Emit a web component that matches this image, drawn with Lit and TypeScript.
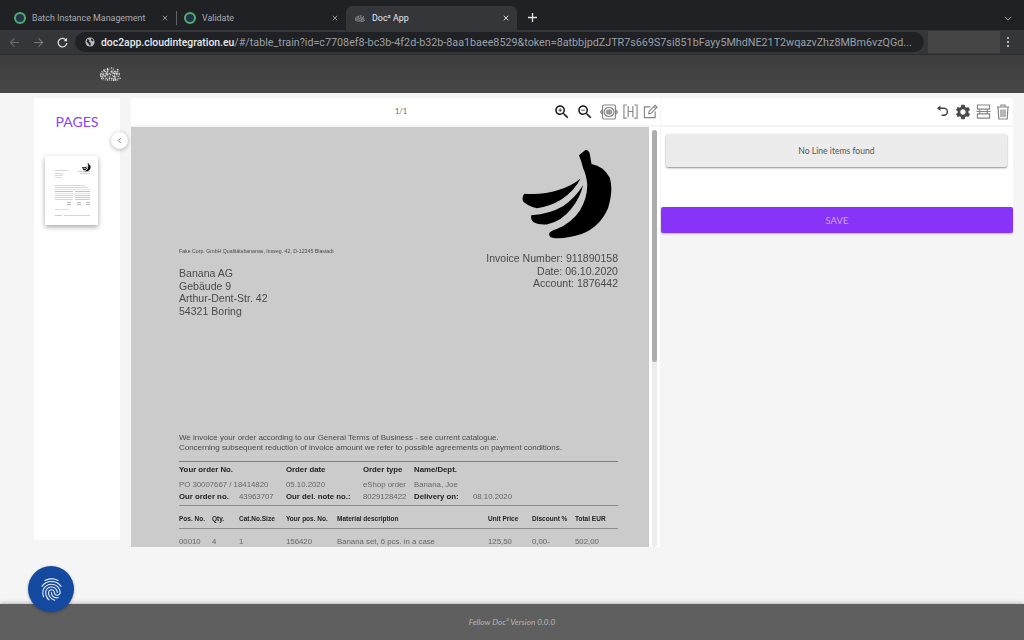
import { css, html, LitElement, svg } from 'lit'
import { customElement } from 'lit/decorators.js'

const URL_HOST = 'doc2app.cloudintegration.eu'
const URL_REST = '/#/table_train?id=c7708ef8-bc3b-4f2d-b32b-8aa1baee8529&token=8atbbjpdZJTR7s669S7si851bFayy5MhdNE21T2wqazvZhz8MBm6vzQGd...'

const LINE_ITEM_HEADS = ['Pos. No.', 'Qty.', 'Cat.No.Size', 'Your pos. No.', 'Material description', 'Unit Price', 'Discount %', 'Total EUR']
const LINE_ITEM = ['00010', '4', '1', '156420', 'Banana set, 6 pcs. in a case', '125,50', '0,00-', '502,00']

const ZOOM_GLASS = 'M15.5 14h-.79l-.28-.27C15.41 12.59 16 11.11 16 9.5 16 5.91 13.09 3 9.5 3S3 5.91 3 9.5 5.91 16 9.5 16c1.61 0 3.09-.59 4.23-1.57l.27.28v.79l5 4.99L20.49 19l-4.99-5zm-6 0C7.01 14 5 11.99 5 9.5S7.01 5 9.5 5 14 7.01 14 9.5 11.99 14 9.5 14z'
const GEAR = 'M19.14 12.94c.04-.3.06-.61.06-.94 0-.32-.02-.64-.07-.94l2.03-1.58c.18-.14.23-.41.12-.61l-1.92-3.32c-.12-.22-.37-.29-.59-.22l-2.39.96c-.5-.38-1.03-.7-1.62-.94l-.36-2.54c-.04-.24-.24-.41-.48-.41h-3.84c-.24 0-.43.17-.47.41l-.36 2.54c-.59.24-1.13.57-1.62.94l-2.39-.96c-.22-.08-.47 0-.59.22L2.74 8.87c-.12.21-.08.47.12.61l2.03 1.58c-.05.3-.09.63-.09.94s.02.64.07.94l-2.03 1.58c-.18.14-.23.41-.12.61l1.92 3.32c.12.22.37.29.59.22l2.39-.96c.5.38 1.03.7 1.62.94l.36 2.54c.05.24.24.41.48.41h3.84c.24 0 .44-.17.47-.41l.36-2.54c.59-.24 1.13-.56 1.62-.94l2.39.96c.22.08.47 0 .59-.22l1.92-3.32c.12-.22.07-.47-.12-.61l-2.01-1.58zM12 15.6c-1.98 0-3.6-1.62-3.6-3.6s1.62-3.6 3.6-3.6 3.6 1.62 3.6 3.6-1.62 3.6-3.6 3.6z'
const FINGERPRINT = 'M17.81 4.47c-.08 0-.16-.02-.23-.06C15.66 3.42 14 3 12.01 3c-1.98 0-3.86.47-5.57 1.41-.24.13-.54.04-.68-.2-.13-.24-.04-.55.2-.68C7.82 2.52 9.86 2 12.01 2c2.13 0 3.99.47 6.03 1.52.25.13.34.43.21.67-.09.18-.26.28-.44.28zM3.5 9.72c-.1 0-.2-.03-.29-.09-.23-.16-.28-.47-.12-.7.99-1.4 2.25-2.5 3.75-3.27C9.98 4.04 14 4.03 17.15 5.65c1.5.77 2.76 1.86 3.75 3.25.16.22.11.54-.12.7-.23.16-.54.11-.7-.12-.9-1.26-2.04-2.25-3.39-2.94-2.87-1.47-6.54-1.47-9.4.01-1.36.7-2.5 1.7-3.4 2.96-.08.14-.23.21-.39.21zm6.25 12.07c-.13 0-.26-.05-.35-.15-.87-.87-1.34-1.43-2.01-2.64-.69-1.23-1.05-2.73-1.05-4.34 0-2.97 2.54-5.39 5.66-5.39s5.66 2.42 5.66 5.39c0 .28-.22.5-.5.5s-.5-.22-.5-.5c0-2.42-2.09-4.39-4.66-4.39-2.57 0-4.66 1.97-4.66 4.39 0 1.44.32 2.77.93 3.85.64 1.15 1.08 1.64 1.85 2.42.19.2.19.51 0 .71-.11.1-.24.15-.37.15zm7.17-1.85c-1.19 0-2.24-.3-3.1-.89-1.49-1.01-2.38-2.65-2.38-4.39 0-.28.22-.5.5-.5s.5.22.5.5c0 1.41.72 2.74 1.94 3.56.71.48 1.54.71 2.54.71.24 0 .64-.03 1.04-.1.27-.05.53.13.58.41.05.27-.13.53-.41.58-.57.11-1.07.12-1.21.12zM14.91 22c-.04 0-.09-.01-.13-.02-1.59-.44-2.63-1.03-3.72-2.1-1.4-1.39-2.17-3.24-2.17-5.22 0-1.62 1.38-2.94 3.08-2.94 1.7 0 3.08 1.32 3.08 2.94 0 1.07.93 1.94 2.08 1.94s2.08-.87 2.08-1.94c0-3.77-3.25-6.83-7.25-6.83-2.84 0-5.44 1.58-6.61 4.03-.39.81-.59 1.76-.59 2.8 0 .78.07 2.01.67 3.61.1.26-.03.55-.29.64-.26.1-.55-.04-.64-.29-.49-1.31-.73-2.61-.73-3.96 0-1.2.23-2.29.68-3.24 1.33-2.79 4.28-4.6 7.51-4.6 4.55 0 8.25 3.51 8.25 7.83 0 1.62-1.38 2.94-3.08 2.94s-3.08-1.32-3.08-2.94c0-1.07-.93-1.94-2.08-1.94s-2.08.87-2.08 1.94c0 1.71.66 3.31 1.87 4.51.95.94 1.86 1.46 3.27 1.85.27.07.42.35.35.61-.05.23-.26.38-.47.38z'

// banana drawn in the coordinates of a 160x110 crop, scaled up 3x
const BANANA = [
  'M237 45 L258 28 Q268 30 270 42 L275 71 Q312 78 330 112 Q342 150 325 205 Q300 262 245 283 Q200 298 160 295 Q146 292 147 282 Q150 274 170 268 Q215 250 240 212 Q264 172 262 130 Q258 100 250 85 Q244 60 237 45 Z',
  'M250 135 Q240 175 215 205 Q185 245 140 254 Q115 256 100 247 Q90 238 93 226 Q150 222 190 198 Q225 175 250 135 Z',
  'M242 115 Q225 150 185 178 Q150 200 110 205 Q80 198 68 184 Q64 170 72 161 Q130 165 175 150 Q215 138 242 115 Z',
]

// speckled cloud used for the app logo and the tab favicon
const cloudDots = () => {
  const dots = []
  let seed = 7
  for (let y = 1; y < 13; y += 1.7) {
    const half = 10 * Math.sqrt(Math.max(0, 1 - Math.pow((y - 8) / 7.5, 2)))
    for (let x = 10.5 - half; x < 10.5 + half; x += 2) {
      seed = (seed * 73 + 11) % 101
      const r = 0.45 + (seed % 5) * 0.12
      dots.push(svg`<circle cx=${x + (seed % 3) * 0.3} cy=${y + (seed % 2) * 0.4} r=${r}></circle>`)
    }
  }
  return dots
}

// x, y, width, height of the tiny invoice lines in the page thumbnail
const THUMB_LINES = [
  [10, 14, 13, 0.4], [10, 17, 8, 0.4], [10, 19, 8, 0.4], [10, 21, 7, 0.4], [33, 15, 12, 0.4], [35, 17, 10, 0.4],
  [10, 29, 30, 0.4], [10, 31, 33, 0.4], [10, 33, 35, 0.3], [10, 35, 18, 0.6], [30, 35, 15, 0.6], [10, 37, 35, 0.3],
  [10, 39, 18, 0.4], [30, 39, 15, 0.5], [10, 41, 18, 0.4], [30, 41, 15, 0.5], [10, 43, 18, 0.4], [30, 43, 15, 0.5],
  [22, 46, 4, 0.7], [32, 46, 4, 0.7], [41, 46, 4, 0.7], [22, 48, 4, 0.7], [32, 48, 4, 0.7], [41, 48, 4, 0.7],
  [10, 53, 14, 0.3], [10, 59, 7, 0.5], [19, 59, 26, 0.4],
]

@customElement('app-root')
export class AppRoot extends LitElement {
  private _tab(label: string, kind: string, favicon: unknown = html`<span class="ring"></span>`) {
    return html`
      <div class="tab ${kind}">
        ${favicon}
        <span class="tab-label">${label}</span>
        <svg class="tab-close" viewBox="0 0 8 8"><path d="M1 1l6 6M7 1L1 7"></path></svg>
      </div>
    `
  }

  private _browser() {
    return html`
      <div class="tabstrip">
        ${this._tab('Batch Instance Management', 'first')}
        <span class="tab-sep"></span>
        ${this._tab('Validate', 'second')}
        ${this._tab('Doc² App', 'active', html`<svg class="tab-logo" viewBox="0 0 21 14">${cloudDots()}</svg>`)}
        <svg class="tab-plus" viewBox="0 0 10 10"><path d="M5 0v10M0 5h10"></path></svg>
        <svg class="tab-menu" viewBox="0 0 10 6"><path d="M1 1l4 4 4-4"></path></svg>
      </div>
      <div class="toolbar">
        <svg class="nav" viewBox="0 0 12 12"><path d="M11 6H1.5M6 1.500L1.500 6 6 10.500"></path></svg>
        <svg class="nav dim" viewBox="0 0 12 12"><path d="M1 6h9.500M6 1.500L10.500 6 6 10.500"></path></svg>
        <svg class="nav reload" viewBox="0 0 12 12"><path d="M10 3.600A4.700 4.700 0 1 0 10.700 6.500"></path><path class="fill" d="M11 .8v3.700H7.300z"></path></svg>
        <div class="omnibox">
          <svg class="globe" viewBox="0 0 12 12"><circle cx="6" cy="6" r="5.500"></circle><path d="M3 2.500l2.500 1-1 2 2 1 .5 3-1.500 1-1.500-3-2-1.500zM8 1.500l2.500 3-2 .5-1.500-1.500z"></path></svg>
          <span class="url"><b>${URL_HOST}</b>${URL_REST}</span>
        </div>
        <div class="extensions"></div>
        <div class="kebab"><i></i><i></i><i></i></div>
      </div>
    `
  }

  private _viewerTools() {
    return html`
      <div class="tools">
        <svg class="tool dark" viewBox="0 0 24 24"><path d=${ZOOM_GLASS}></path><path d="M12 10h-2v2H9v-2H7V9h2V7h1v2h2v1z"></path></svg>
        <svg class="tool dark" viewBox="0 0 24 24"><path d=${ZOOM_GLASS}></path><path d="M7 9h5v1H7z"></path></svg>
        <svg class="tool scan" viewBox="0 0 18 16">
          <path class="line" d="M4 1h10a1.500 1.500 0 0 1 1.500 1.500v11A1.500 1.500 0 0 1 14 15H4a1.500 1.500 0 0 1-1.500-1.500v-11A1.500 1.500 0 0 1 4 1zM2.500 5.500L.6 8l1.900 2.500M15.500 5.500L17.400 8l-1.900 2.500"></path>
          <ellipse class="line" cx="9" cy="8" rx="5" ry="4.500"></ellipse>
          <ellipse class="solid" cx="9" cy="8" rx="3.200" ry="2.800"></ellipse>
        </svg>
        <svg class="tool wide" viewBox="0 0 16 16"><path class="line" d="M4 1H1v14h3M12 1h3v14h-3M5.500 2v12M10.500 2v12M5.500 8h5"></path></svg>
        <svg class="tool wide" viewBox="0 0 16 16"><path class="line" d="M8 3H1.500v11.500H13V8"></path><path class="line" d="M6 10.500l.6-2.600L13 1.500l2 2-6.400 6.400zM11.500 3l2 2"></path></svg>
      </div>
    `
  }

  private _invoice() {
    return html`
      <div class="doc-page">
        <svg class="banana" viewBox="65 28 272 268">${BANANA.map(d => svg`<path d=${d}></path>`)}</svg>
        <div class="letterhead">
          <div>
            <div class="sender">Fake Corp. GmbH Qualitätsbananas, Imweg. 42, D-12345 Blastadt</div>
            <div class="address">Banana AG<br />Gebäude 9<br />Arthur-Dent-Str. 42<br />54321 Boring</div>
          </div>
          <div class="meta">Invoice Number: 911890158<br />Date: 06.10.2020<br />Account: 1876442</div>
        </div>
        <p class="terms">
          We invoice your order according to our General Terms of Business - see current catalogue.<br />
          Concerning subsequent reduction of invoice amount we refer to possible agreements on payment conditions.
        </p>
        <div class="order">
          <b class="span2">Your order No.</b><b>Order date</b><b>Order type</b><b class="span2">Name/Dept.</b>
          <span class="span2 gap">PO 30007667 / 18414820</span><span class="gap">05.10.2020</span><span class="gap">eShop order</span><span class="span2 gap">Banana, Joe</span>
          <b>Our order no.</b><span>43963707</span><b>Our del. note no.:</b><span>8029128422</span><b>Delivery on:</b><span>08.10.2020</span>
        </div>
        <div class="items heads">${LINE_ITEM_HEADS.map(h => html`<b>${h}</b>`)}</div>
        <div class="items">${LINE_ITEM.map(c => html`<span>${c}</span>`)}</div>
      </div>
    `
  }

  render() {
    return html`
      ${this._browser()}
      <header class="app-bar">
        <svg class="logo" viewBox="0 0 21 14">${cloudDots()}</svg>
      </header>
      <main class="workspace">
        <aside class="pages">
          <h2>PAGES</h2>
          <div class="thumb">
            <svg viewBox="0 0 53 69">
              <g transform="translate(37 7) scale(.032)">${BANANA.map(d => svg`<path transform="translate(-65 -28)" d=${d}></path>`)}</g>
              ${THUMB_LINES.map(([x, y, w, h]) => svg`<rect x=${x} y=${y} width=${w} height=${h} fill="#999"></rect>`)}
            </svg>
          </div>
          <button class="collapse" aria-label="Collapse pages">
            <svg viewBox="0 0 6 8"><path d="M4.500 1L1.500 4l3 3"></path></svg>
          </button>
        </aside>
        <section class="viewer">
          <div class="viewer-bar">
            <span class="pager">1/1</span>
            ${this._viewerTools()}
          </div>
          <div class="doc-area">
            <div class="doc-scroll">${this._invoice()}</div>
            <div class="scrollbar"><div class="thumb-bar"></div></div>
          </div>
        </section>
        <section class="side">
          <div class="side-bar">
            <svg class="tool undo" viewBox="0 0 14 14"><path class="line dark-line" d="M2.500 3.500h6a3.800 3.800 0 0 1 0 7.600H6"></path><path class="solid dark-solid" d="M4.800 .5v6L1 3.500z"></path></svg>
            <svg class="tool gear" viewBox="0 0 24 24"><path d=${GEAR}></path></svg>
            <svg class="tool wide" viewBox="0 0 16 16"><path class="line" d="M1.500 1h13v4.500h-13zM1.500 10.500h13V15h-13zM4 5.500v5M12 5.500v5M.5 8h15"></path></svg>
            <svg class="tool trash" viewBox="0 0 14 16"><path class="line" d="M.8 3h12.400M5 3V1h4v2M2 3l.8 12h8.400L12 3M5 5.500V13M7 5.500V13M9 5.500V13"></path></svg>
          </div>
          <div class="lines">
            <div class="empty-card">No Line items found</div>
          </div>
          <button class="save">SAVE</button>
        </section>
      </main>
      <footer class="app-footer">Fellow Doc² Version 0.0.0</footer>
      <button class="fab" aria-label="Identify">
        <svg viewBox="0 0 24 24"><path d=${FINGERPRINT}></path></svg>
      </button>
    `
  }

  static styles = css`
    :host {
      display: flex;
      flex-direction: column;
      position: relative;
      width: 1024px;
      height: 640px;
      overflow: hidden;
      background: #f5f5f5;
      font-family: 'Lato', 'Open Sans', sans-serif;
    }

    .tabstrip {
      display: flex;
      align-items: flex-end;
      flex: 0 0 30px;
      padding-left: 8px;
      background: #202124;
    }

    .tab {
      display: flex;
      align-items: center;
      height: 24px;
      box-sizing: border-box;
      border-radius: 6px 6px 0 0;
      color: #a8abb0;
      font: 8.9px 'Roboto', sans-serif;
    }

    .tab.first {
      width: 168px;
      padding: 0 8px 0 6px;
    }

    .tab.second {
      width: 169px;
      padding: 0 8px 0 7px;
    }

    .tab.active {
      width: 171px;
      padding: 0 8px 0 9px;
      background: #35363a;
      color: #e8eaed;
    }

    .ring {
      width: 8px;
      height: 8px;
      border: 2px solid #4caf6e;
      border-radius: 50%;
      background: #24324a;
      margin-right: 6px;
    }

    .tab-logo {
      width: 10px;
      height: 7px;
      margin-right: 7px;
      fill: #c4c6c9;
    }

    .tab-label {
      flex: 1;
      white-space: nowrap;
    }

    .tab-close {
      width: 6px;
      height: 6px;
      fill: none;
      stroke: #9aa0a6;
      stroke-width: 1.2;
    }

    .tab.active .tab-close {
      stroke: #e8eaed;
    }

    .tab-sep {
      width: 1px;
      height: 14px;
      margin-bottom: 5px;
      background: #5f6368;
    }

    .tab-plus {
      width: 9px;
      height: 9px;
      margin: 0 0 8px 11px;
      fill: none;
      stroke: #e0e2e5;
      stroke-width: 1.4;
    }

    .tab-menu {
      margin: 0 12px 9px auto;
      width: 8px;
      height: 5px;
      fill: none;
      stroke: #a8abb0;
      stroke-width: 1.2;
    }

    .toolbar {
      display: flex;
      align-items: center;
      flex: 0 0 25px;
      padding-left: 9px;
      background: #35363a;
      border-bottom: 1px solid #2c2d30;
      box-sizing: border-box;
    }

    .nav {
      width: 11px;
      height: 11px;
      margin-right: 13px;
      fill: none;
      stroke: #686b70;
      stroke-width: 1.2;
    }

    .nav.dim {
      stroke: #74777c;
    }

    .nav.reload {
      stroke: #dfe1e5;
      stroke-width: 1.4;
      margin-right: 7px;
    }

    .nav .fill {
      fill: #dfe1e5;
      stroke: none;
    }

    .omnibox {
      display: flex;
      align-items: center;
      flex: none;
      width: 849px;
      height: 20px;
      padding: 0 6px 0 10px;
      box-sizing: border-box;
      border-radius: 10px;
      background: #202124;
      overflow: hidden;
    }

    .globe {
      flex: none;
      width: 10px;
      height: 10px;
      margin-right: 6px;
      fill: #202124;
    }

    .globe circle {
      fill: #b8babd;
    }

    .url {
      color: #9aa0a6;
      font: 10.75px 'Roboto', sans-serif;
      white-space: nowrap;
    }

    .url b {
      color: #e8eaed;
      font-size: 10.4px;
      font-weight: 500;
    }

    .extensions {
      width: 72px;
      height: 22px;
      margin-left: 4px;
      background: #454545;
    }

    .kebab {
      display: flex;
      flex-direction: column;
      gap: 2px;
      margin-left: 7px;
    }

    .kebab i {
      width: 2px;
      height: 2px;
      background: #dfe1e5;
      border-radius: 50%;
    }

    .app-bar {
      display: flex;
      align-items: center;
      flex: 0 0 38px;
      padding-left: 100px;
      background: linear-gradient(#3d3d3d, #484848);
    }

    .logo {
      width: 21px;
      height: 14px;
      fill: #dcdcdc;
      filter: blur(0.3px);
    }

    .workspace {
      flex: 1;
      display: flex;
      align-items: flex-start;
      padding: 5px 0 0 34px;
      min-height: 0;
    }

    .pages {
      position: relative;
      width: 86px;
      height: 442px;
      background: #fff;
    }

    .pages h2 {
      margin: 16px 0 0;
      color: #8a3ffc;
      font-size: 14px;
      line-height: 16px;
      font-weight: 400;
      text-align: center;
    }

    .thumb {
      width: 53px;
      height: 69px;
      margin: 26px 0 0 11px;
      background: #fff;
      box-shadow: 0 2px 5px rgba(0, 0, 0, 0.35);
    }

    .thumb svg {
      display: block;
      width: 100%;
      height: 100%;
      filter: blur(0.4px);
    }

    .collapse {
      position: absolute;
      top: 34px;
      right: -8px;
      width: 17px;
      height: 17px;
      padding: 0;
      border: 0;
      border-radius: 50%;
      background: #fff;
      box-shadow: 0 1px 4px rgba(0, 0, 0, 0.3);
    }

    .collapse svg {
      display: block;
      width: 5px;
      height: 7px;
      margin: auto;
      fill: none;
      stroke: #777;
      stroke-width: 1.1;
    }

    .viewer {
      width: 529px;
      margin-left: 11px;
    }

    .viewer-bar {
      display: flex;
      align-items: center;
      height: 27px;
      padding: 0 2px 0 264px;
      box-sizing: border-box;
      background: #fff;
    }

    .pager {
      color: #666;
      font-size: 7.5px;
    }

    .tools {
      display: flex;
      align-items: center;
      gap: 5px;
      margin-left: auto;
    }

    .tool {
      display: block;
      width: 18px;
      height: 18px;
      flex: none;
    }

    .tool.dark {
      fill: #1b1b1b;
    }

    .tool.scan {
      height: 16px;
      margin-left: 1px;
    }

    .tool.wide {
      width: 15px;
      height: 15px;
    }

    .tool.undo {
      width: 13px;
      height: 13px;
      margin-right: 1px;
    }

    .tool.trash {
      width: 14px;
      height: 16px;
    }

    .tool.gear {
      fill: #4a4a4a;
      margin: 0 -1px;
    }

    .line {
      fill: none;
      stroke: #858585;
      stroke-width: 1.2;
    }

    .solid {
      fill: #999;
    }

    .dark-line {
      stroke: #444;
      stroke-width: 1.5;
    }

    .dark-solid {
      fill: #444;
    }

    .doc-area {
      display: flex;
      height: 420px;
      margin-top: 2px;
      background: #fff;
    }

    .doc-scroll {
      width: 518px;
      overflow: hidden;
      background: #cbcbcb;
    }

    .scrollbar {
      width: 5px;
      margin: 3px 0 0 3px;
      background: #ececec;
      border-radius: 3px;
    }

    .thumb-bar {
      height: 232px;
      border-radius: 3px;
      background: #adadad;
    }

    .doc-page {
      padding: 22px 31px 0 48px;
      color: #4a4a4a;
      font-family: 'Liberation Sans', Arial, sans-serif;
      filter: blur(0.35px);
    }

    .banana {
      display: block;
      width: 90px;
      height: 90px;
      margin: 0 6px 0 auto;
      fill: #000;
    }

    .letterhead {
      display: flex;
      justify-content: space-between;
      height: 186px;
      margin-top: 8px;
    }

    .sender {
      height: 8px;
      font-size: 5.23px;
      line-height: 8px;
    }

    .address {
      margin-top: 12px;
      font-size: 10.56px;
      line-height: 12.6px;
    }

    .meta {
      padding-top: 5px;
      font-size: 10.56px;
      line-height: 12.7px;
      text-align: right;
    }

    .terms {
      margin: 0;
      padding-bottom: 8px;
      border-bottom: 1px solid #7d7d7d;
      font-size: 7.96px;
      line-height: 10px;
    }

    .order {
      display: grid;
      grid-template-columns: 60px 47px 77px 51px 59px 1fr;
      padding: 2px 0;
      border-bottom: 1px solid #8d8d8d;
      color: #666;
      font-size: 7.8px;
      line-height: 12px;
    }

    .order b {
      color: #222;
    }

    .order .span2 {
      grid-column: span 2;
    }

    .order .gap {
      margin-top: 2.5px;
    }

    .items {
      display: grid;
      grid-template-columns: 33px 27px 47px 51px 151px 44px 43px 1fr;
      padding-top: 8px;
      color: #666;
      font-size: 7.8px;
      line-height: 10px;
    }

    .items.heads {
      padding-bottom: 4px;
      border-bottom: 1px solid #8d8d8d;
      font-size: 6.5px;
    }

    .items.heads b {
      color: #222;
    }

    .side {
      width: 352px;
      margin-left: 1px;
    }

    .side-bar {
      display: flex;
      align-items: center;
      justify-content: flex-end;
      gap: 5px;
      height: 27px;
      padding-right: 3px;
      box-sizing: border-box;
      background: #fff;
    }

    .lines {
      height: 80px;
      margin-top: 2px;
      padding: 7px 6px 0 5px;
      box-sizing: border-box;
      background: #fff;
    }

    .empty-card {
      display: flex;
      align-items: center;
      justify-content: center;
      height: 33px;
      border-radius: 2px;
      background: #ececec;
      box-shadow: 0 1px 2px rgba(0, 0, 0, 0.45);
      color: #555;
      font-size: 8.6px;
    }

    .save {
      display: block;
      width: 100%;
      height: 26px;
      padding: 0;
      border: 0;
      border-radius: 2px;
      background: #8833f8;
      box-shadow: 0 1px 2px rgba(0, 0, 0, 0.25);
      color: #c9a4fb;
      font: 9.5px 'Lato', sans-serif;
    }

    .app-footer {
      flex: 0 0 36px;
      display: flex;
      align-items: center;
      justify-content: center;
      background: #5f5f5f;
      box-shadow: 0 -1px 4px rgba(0, 0, 0, 0.25);
      color: #b5b5b5;
      font-size: 8.2px;
      font-style: italic;
    }

    .fab {
      position: absolute;
      left: 28px;
      top: 566px;
      width: 46px;
      height: 46px;
      padding: 0;
      border: 0;
      border-radius: 50%;
      background: #1449a0;
      box-shadow: 0 1px 3px rgba(0, 0, 0, 0.3);
    }

    .fab svg {
      display: block;
      width: 27px;
      height: 27px;
      margin: auto;
      fill: #e6ecf6;
    }
  `
}

declare global {
  interface HTMLElementTagNameMap {
    'app-root': AppRoot
  }
}
